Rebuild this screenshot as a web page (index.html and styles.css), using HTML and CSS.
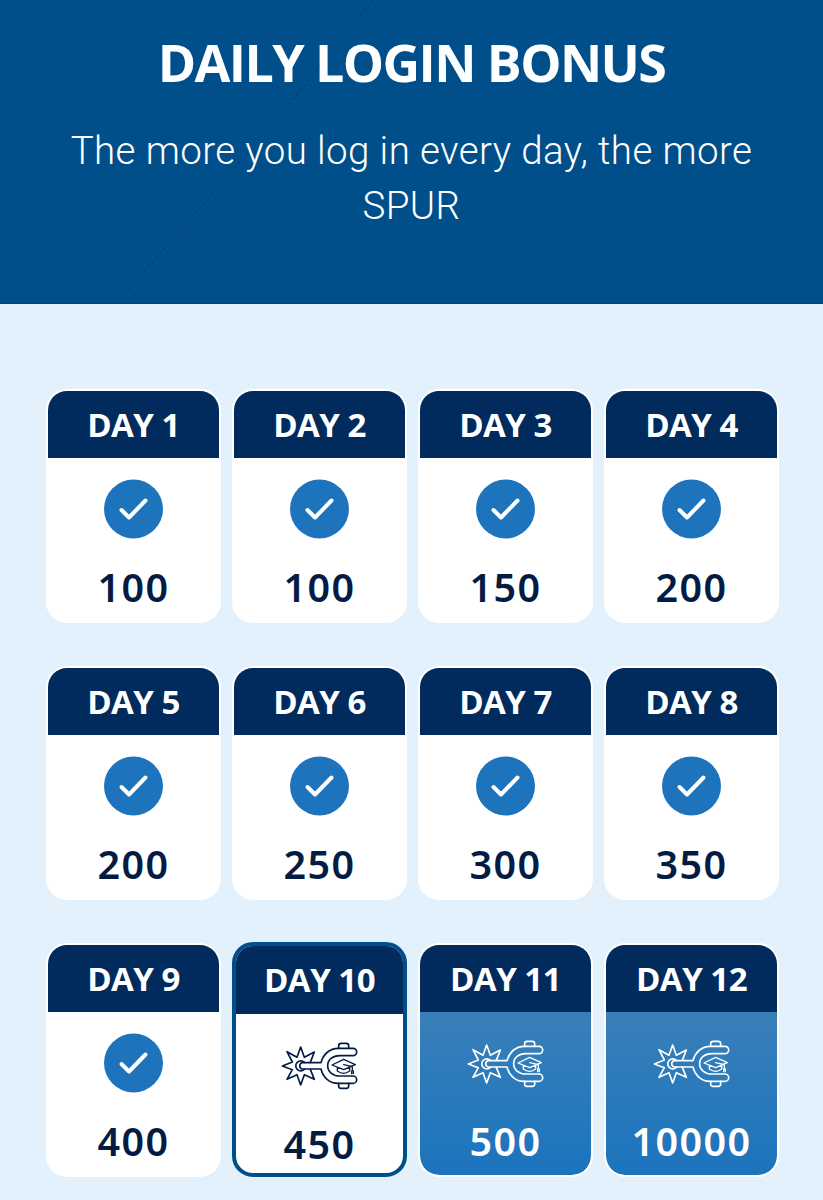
FILE: index.html
```
<!DOCTYPE html>
<html lang="en">
<head>
    <meta charset="UTF-8">
    <meta name="viewport" content="width=device-width, initial-scale=1.0">
    <title>Daily Login Bonus</title>
    <link rel="stylesheet" href="styles.css">
</head>
<body>
    <svg class="symbols" width="0" height="0">
        <symbol id="check" viewBox="0 0 60 60">
            <circle cx="29.500" cy="30" r="29.5" fill="#1d74bd"/>
            <path d="M17.500 31l7.500 7.500L41.500 21.500" fill="none" stroke="#fff" stroke-width="4" stroke-linecap="round" stroke-linejoin="round"/>
        </symbol>
        <symbol id="spur" viewBox="0 0 270 210">
            <g fill="none" stroke="currentColor" stroke-width="5" stroke-linejoin="round" stroke-linecap="round">
                <path d="M106 97L118 66L88 82L77 51L66 82L36 65L52 96L22 108L52 119L36 148L66 134L77 165L88 134L118 148L106 118"/>
                <path d="M88 97A15 15 0 1 0 88 118"/>
                <path d="M138 98H81a10 10 0 0 0 0 19H138C144 142 163 160 190 160H234a11 11 0 0 0 0-22H194C173 138 158 125 158 107S173 77 194 77H234a11 11 0 0 0 0-22H190C163 55 144 74 138 98Z"/>
                <path d="M191 55V47q0-7 7-7H214q7 0 7 7V55M191 160V168q0 7 7 7H214q7 0 7-7V160"/>
                <path stroke-width="4" d="M171 105L206 88L241 104L206 119ZM187 113V123Q206 137 224 123V113M206 104L232 110V122M230 123V131M235 123V131"/>
            </g>
        </symbol>
    </svg>

    <header class="header">
        <svg class="header-line" viewBox="0 0 823 304">
            <path d="M372 0C310 82 240 164 117 302" fill="none" stroke="#03306a" stroke-width="1" stroke-dasharray="2 4"/>
        </svg>
        <h1>DAILY LOGIN BONUS</h1>
        <p>The more you log in every day, the more SPUR</p>
    </header>

    <main class="days">
        <div class="day">
            <h2>DAY 1</h2>
            <div class="day-body"><svg class="check"><use href="#check"/></svg><span>100</span></div>
        </div>
        <div class="day">
            <h2>DAY 2</h2>
            <div class="day-body"><svg class="check"><use href="#check"/></svg><span>100</span></div>
        </div>
        <div class="day">
            <h2>DAY 3</h2>
            <div class="day-body"><svg class="check"><use href="#check"/></svg><span>150</span></div>
        </div>
        <div class="day">
            <h2>DAY 4</h2>
            <div class="day-body"><svg class="check"><use href="#check"/></svg><span>200</span></div>
        </div>
        <div class="day">
            <h2>DAY 5</h2>
            <div class="day-body"><svg class="check"><use href="#check"/></svg><span>200</span></div>
        </div>
        <div class="day">
            <h2>DAY 6</h2>
            <div class="day-body"><svg class="check"><use href="#check"/></svg><span>250</span></div>
        </div>
        <div class="day">
            <h2>DAY 7</h2>
            <div class="day-body"><svg class="check"><use href="#check"/></svg><span>300</span></div>
        </div>
        <div class="day">
            <h2>DAY 8</h2>
            <div class="day-body"><svg class="check"><use href="#check"/></svg><span>350</span></div>
        </div>
        <div class="day">
            <h2>DAY 9</h2>
            <div class="day-body"><svg class="check"><use href="#check"/></svg><span>400</span></div>
        </div>
        <div class="day today">
            <h2>DAY 10</h2>
            <div class="day-body"><svg class="spur"><use href="#spur"/></svg><span>450</span></div>
        </div>
        <div class="day next">
            <h2>DAY 11</h2>
            <div class="day-body"><svg class="spur"><use href="#spur"/></svg><span>500</span></div>
        </div>
        <div class="day next">
            <h2>DAY 12</h2>
            <div class="day-body"><svg class="spur"><use href="#spur"/></svg><span>10000</span></div>
        </div>
    </main>
</body>
</html>
```
FILE: styles.css
```
* {
    box-sizing: border-box;
}
body {
    margin: 0;
    height: 1200px;
    overflow: hidden;
    background-color: #e3f1fd;
    font-family: "Open Sans", "Noto Sans", sans-serif;
}
.symbols {
    display: block;
}
.header {
    position: relative;
    height: 304px;
    padding-top: 27px;
    background-color: #004f8b;
    border-bottom: 1px solid #00447d;
    color: #fff;
    text-align: center;
}
.header-line {
    position: absolute;
    top: 0;
    left: 0;
    width: 100%;
    height: 100%;
}
.header h1 {
    position: relative;
    margin: 0;
    font-size: 52px;
    line-height: 70px;
    font-weight: 700;
    letter-spacing: -1.6px;
}
.header p {
    position: relative;
    margin: 26px auto 0;
    width: 720px;
    font-family: Roboto, sans-serif;
    font-size: 38.5px;
    line-height: 55px;
    font-weight: 300;
    letter-spacing: 0.4px;
}
.days {
    display: grid;
    grid-template-columns: repeat(4, 175px);
    grid-auto-rows: 234px;
    gap: 43px 11px;
    padding: 85px 0 0 46px;
}
.day {
    display: flex;
    flex-direction: column;
    border: 2px solid #fff;
    border-radius: 21px;
    background-color: #fff;
    overflow: hidden;
    color: #041c43;
}
.day h2 {
    flex: none;
    margin: 0;
    height: 67px;
    background-color: #002b5c;
    color: #fff;
    font-size: 33px;
    line-height: 68px;
    font-weight: 700;
    letter-spacing: -0.5px;
    text-align: center;
}
.day-body {
    flex: 1;
    display: flex;
    flex-direction: column;
    align-items: center;
    padding-top: 21px;
}
.day-body span {
    margin-top: 20px;
    font-family: "Noto Sans", sans-serif;
    font-size: 39.5px;
    line-height: 56px;
    font-weight: 600;
    letter-spacing: 1.4px;
}
.check {
    flex: none;
    width: 60px;
    height: 60px;
}
.spur {
    flex: none;
    width: 90px;
    height: 70px;
    margin: -5px 0;
}
.today {
    margin: -1px 0 0;
    border: 4px solid #004f8b;
}
.today h2 {
    height: 68px;
}
.today .day-body span {
    margin-top: 21px;
}
.next {
    color: #fff;
    background-color: #fff;
}
.next .day-body {
    background: linear-gradient(#397fb9, #1b74bd);
    border-radius: 0 0 19px 19px;
}
```
